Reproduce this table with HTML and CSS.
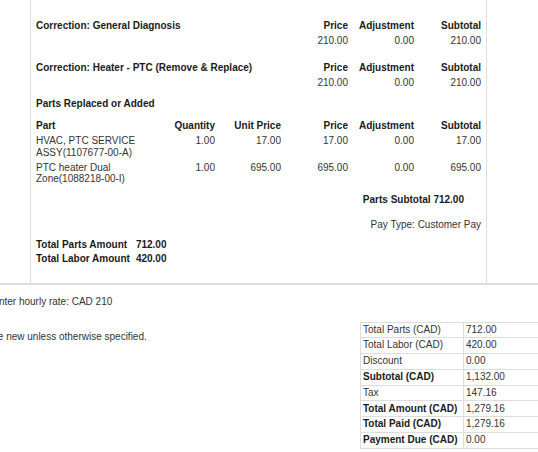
FILE: index.html
```html
<!DOCTYPE html>
<html>
<head>
<meta charset="utf-8">
<link rel="stylesheet" href="styles.css">
</head>
<body>
<div class="sheet">
  <section class="ro">
    <div class="job">
      <div class="row head"><span class="title">Correction: General Diagnosis</span><span class="c4">Price</span><span>Adjustment</span><span>Subtotal</span></div>
      <div class="row"><span class="c4">210.00</span><span>0.00</span><span>210.00</span></div>
    </div>
    <div class="job">
      <div class="row head"><span class="title">Correction: Heater - PTC (Remove &amp; Replace)</span><span class="c4">Price</span><span>Adjustment</span><span>Subtotal</span></div>
      <div class="row"><span class="c4">210.00</span><span>0.00</span><span>210.00</span></div>
    </div>
    <div class="parts">
      <div class="row head"><span class="title">Parts Replaced or Added</span></div>
      <div class="row head colhead"><span class="left">Part</span><span>Quantity</span><span>Unit Price</span><span>Price</span><span>Adjustment</span><span>Subtotal</span></div>
      <div class="row"><span class="left">HVAC, PTC SERVICE ASSY(1107677-00-A)</span><span>1.00</span><span>17.00</span><span>17.00</span><span>0.00</span><span>17.00</span></div>
      <div class="row"><span class="left">PTC heater Dual Zone(1088218-00-I)</span><span>1.00</span><span>695.00</span><span>695.00</span><span>0.00</span><span>695.00</span></div>
    </div>
    <div class="subtotal">Parts Subtotal 712.00</div>
    <div class="paytype">Pay Type: Customer Pay</div>
    <div class="totals">
      <span>Total Parts Amount</span><span>712.00</span>
      <span>Total Labor Amount</span><span>420.00</span>
    </div>
  </section>
  <div class="rule"></div>
  <p class="rate">Service Center hourly rate: CAD 210</p>
  <div class="footer">
    <p class="note">All parts are new unless otherwise specified.</p>
    <table class="summary">
      <colgroup><col class="k"><col class="v"></colgroup>
      <tr><td>Total Parts (CAD)</td><td>712.00</td></tr>
      <tr><td>Total Labor (CAD)</td><td>420.00</td></tr>
      <tr><td>Discount</td><td>0.00</td></tr>
      <tr class="b"><td>Subtotal (CAD)</td><td>1,132.00</td></tr>
      <tr><td>Tax</td><td>147.16</td></tr>
      <tr class="b"><td>Total Amount (CAD)</td><td>1,279.16</td></tr>
      <tr class="b"><td>Total Paid (CAD)</td><td>1,279.16</td></tr>
      <tr class="b"><td>Payment Due (CAD)</td><td>0.00</td></tr>
    </table>
  </div>
</div>
</body>
</html>
```
FILE: styles.css
```css
html, body {
  margin: 0;
  padding: 0;
  background: #fff;
  overflow: hidden;
}
body {
  width: 538px;
  height: 452px;
  font-family: "Liberation Sans", Arial, sans-serif;
  font-size: 10px;
  line-height: 11.5px;
  color: #333;
}
.sheet {
  margin-left: -50px;
  width: 680px;
}
.ro {
  margin-left: 80px;
  width: 457px;
  box-sizing: border-box;
  border-left: 1px solid #ddd;
  border-right: 1px solid #ddd;
  padding: 18.5px 5px 19px 5px;
}
.row {
  display: grid;
  grid-template-columns: 113px 66px 66px 67px 66px 67px;
  padding: 1.75px 0;
}
.row > span {
  text-align: right;
}
.row > .left {
  text-align: left;
}
.row > .title {
  grid-column: 1 / 4;
  text-align: left;
}
.row > .c4 {
  grid-column: 4;
}
.head {
  font-weight: bold;
  color: #1a1a1a;
}
.job + .job {
  margin-top: 12px;
}
.parts {
  margin-top: 6px;
}
.colhead {
  margin-top: 7px;
}
.subtotal {
  margin-top: 6px;
  padding: 1.75px 17px 1.75px 0;
  text-align: right;
  font-weight: bold;
  color: #1a1a1a;
}
.paytype {
  margin-top: 10px;
  padding: 1.75px 0;
  text-align: right;
}
.totals {
  margin-top: 6px;
  display: grid;
  grid-template-columns: max-content max-content;
  column-gap: 6px;
  row-gap: 2.5px;
  font-weight: bold;
  color: #1a1a1a;
}
.rule {
  border-top: 2px solid #ddd;
}
.rate {
  margin: 10.5px 0 0 0;
}
.footer {
  margin-top: 14.5px;
  display: grid;
  grid-template-columns: 410px max-content;
  align-items: start;
}
.note {
  margin: 9px 0 0 0;
}
.summary {
  border-collapse: collapse;
  table-layout: fixed;
  width: 206px;
  justify-self: start;
}
.summary col.k {
  width: 103px;
}
.summary col.v {
  width: 103px;
}
.summary td {
  border: 1px solid #ddd;
  padding: 1.15px 2px;
  line-height: 12.5px;
  white-space: nowrap;
}
.summary .b td:first-child {
  font-weight: bold;
  color: #1a1a1a;
}
```
